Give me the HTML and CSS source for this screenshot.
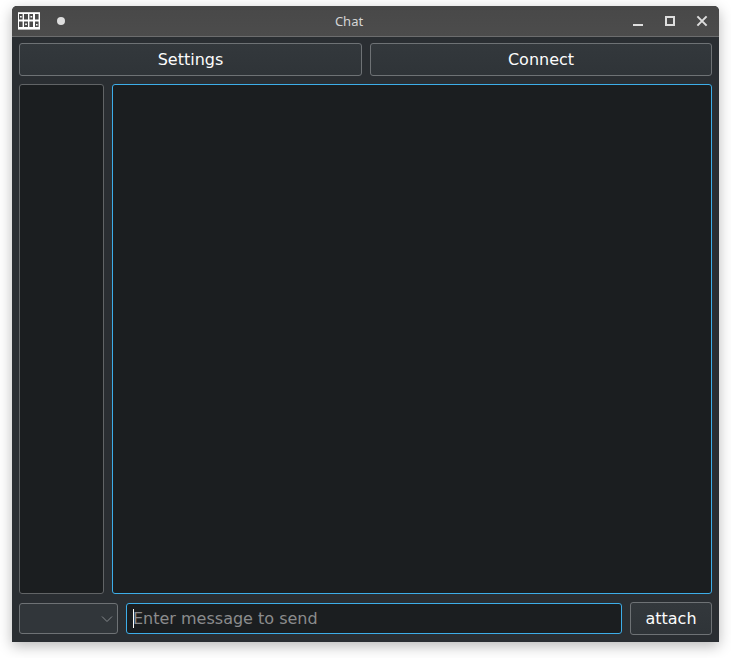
FILE: index.html
```html
<!DOCTYPE html>
<html lang="en">
<head>
<meta charset="utf-8">
<title>Chat</title>
<link rel="stylesheet" href="styles.css">
</head>
<body>
<main class="window">
  <header class="titlebar">
    <svg class="app-icon" width="22" height="18" viewBox="0 0 22 18">
      <path fill="#fff" d="M0 .2h22v17.4H0z"/>
      <path fill="#4a4a4a" d="M1 2h3.6v5.4H1zM6 2h4v5.4H6zM11.4 2H15v5.4h-3.6zM17 2h3.6v5.4H17zM1 9.4h3.6V15H1zM6 9.4h4V15H6zM11.4 9.4H15V15h-3.6zM17 9.4h3.6V15H17z"/>
      <path fill="#fff" d="M2 4h1.7v1.6H2zM12.5 4h1.7v1.6h-1.7zM7.2 11.4h1.7V13H7.200zM18 12h1.6v1.6H18z"/>
    </svg>
    <span class="dot"></span>
    <span class="title">Chat</span>
    <svg class="controls" width="76" height="12" viewBox="0 0 76 12" fill="none" stroke="#dedede" stroke-width="2">
      <path d="M1 10h10M34 2h8v8h-8z"/>
      <path d="M65.4 1.4l9.2 9.2M74.6 1.4l-9.2 9.2"/>
    </svg>
  </header>
  <div class="content">
    <div class="toolbar">
      <button class="button wide">Settings</button>
      <button class="button wide">Connect</button>
    </div>
    <div class="panels">
      <div class="panel users"></div>
      <div class="panel messages"></div>
    </div>
    <div class="composer">
      <div class="select">
        <svg width="12" height="8" viewBox="0 0 12 8" fill="none" stroke="#85898c"><path d="M1 1.500l5 5 5-5"/></svg>
      </div>
      <div class="entry"><span class="caret"></span><span>Enter message to send</span></div>
      <button class="button attach">attach</button>
    </div>
  </div>
</main>
</body>
</html>
```

FILE: styles.css
```css
* { box-sizing: border-box; }
body {
  margin: 0;
  height: 658px;
  padding: 6px 12px 16px;
  background: #fff;
  overflow: hidden;
  font: 16px "DejaVu Sans", sans-serif;
}
.window {
  height: 636px;
  display: flex;
  flex-direction: column;
  background: #2a2e32;
  border-radius: 5px 5px 0 0;
  box-shadow: 0 4px 14px rgba(0, 0, 0, .28);
}
.titlebar {
  height: 31px;
  flex: none;
  display: flex;
  align-items: center;
  padding: 0 11px 0 6px;
  background: linear-gradient(#484848, #4c4c4c);
  border-bottom: 1px solid #6c6d6e;
  border-radius: 5px 5px 0 0;
}
.app-icon { margin-top: -1px; }
.dot {
  width: 8px;
  height: 8px;
  margin-left: 17px;
  border-radius: 50%;
  background: #dedede;
}
.title {
  flex: 1;
  padding-left: 1px;
  text-align: center;
  font: 13px "Noto Sans", sans-serif;
  color: #d5d5d5;
}
.controls { display: block; }
.content {
  flex: 1;
  display: flex;
  flex-direction: column;
  gap: 8px;
  padding: 6px 7px 7px;
}
.toolbar, .panels, .composer { display: flex; gap: 8px; }
.button {
  height: 33px;
  padding: 0 0 1px;
  border: 1px solid #6e7275;
  border-radius: 3px;
  background: linear-gradient(#33383c, #2f3438);
  color: #fcfcfc;
  font: inherit;
}
.wide:first-child { width: 343px; }
.wide:last-child { flex: 1; }
.panels { height: 510px; }
.panel {
  background: #1b1e20;
  border: 1px solid #616466;
  border-radius: 3px;
}
.users { width: 85px; }
.messages { flex: 1; border-color: #3daee9; }
.composer { align-items: center; }
.select {
  width: 99px;
  height: 31px;
  display: flex;
  align-items: center;
  justify-content: flex-end;
  padding-right: 4px;
  border: 1px solid #6e7275;
  border-radius: 3px;
  background: #31363a;
}
.entry {
  flex: 1;
  height: 31px;
  display: flex;
  align-items: center;
  padding-left: 6px;
  border: 1px solid #3daee9;
  border-radius: 3px;
  background: #1b1e20;
  color: #8b8c8d;
}
.caret { width: 1px; height: 19px; margin-right: -1px; background: #fcfcfc; }
.attach { width: 82px; }
```
